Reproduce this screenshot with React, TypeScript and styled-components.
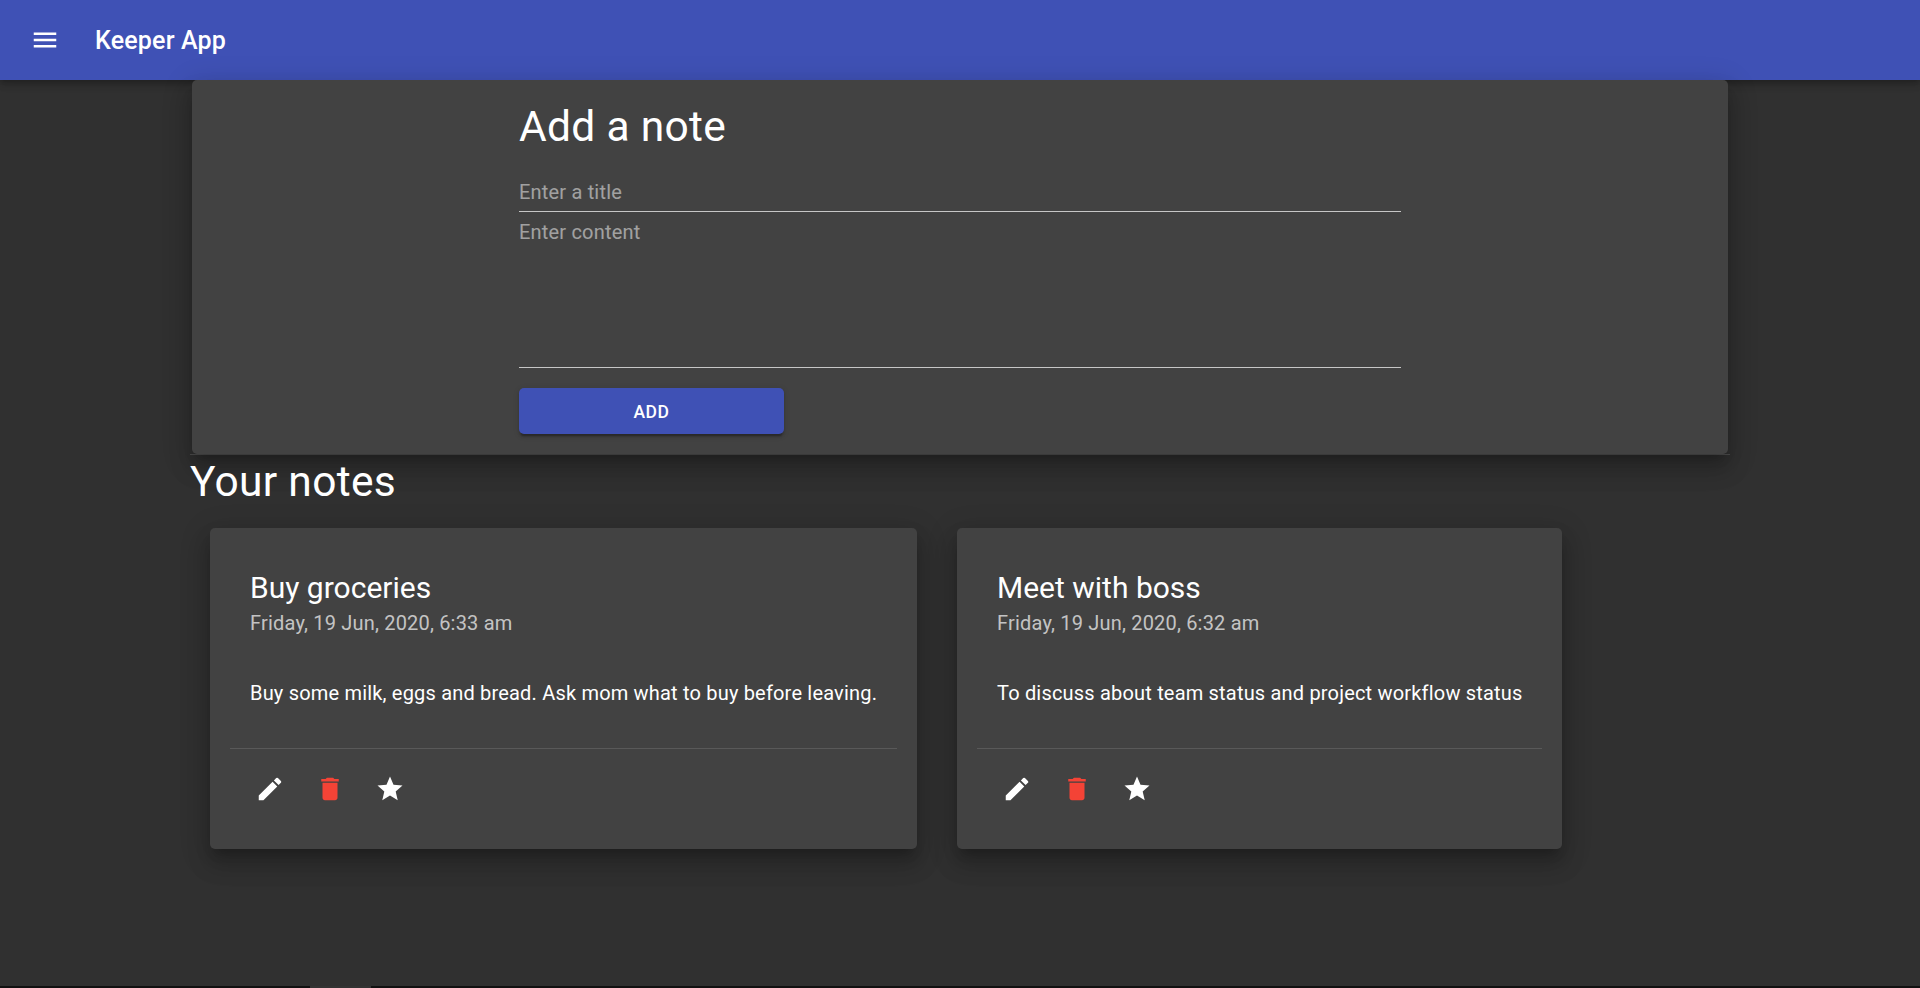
import React from "react";
import styled, { createGlobalStyle } from "styled-components";
import { MdMenu, MdEdit, MdDelete, MdStar } from "react-icons/md";

const GlobalStyle = createGlobalStyle`
  *, *::before, *::after { box-sizing: border-box; }
  html, body, #root { height: 100%; }
  body {
    margin: 0;
    background: #303030;
    color: #fff;
    font-family: Roboto, "Liberation Sans", sans-serif;
    font-size: 20px;
    line-height: 1.5;
    letter-spacing: 0.00938em;
    overflow: hidden;
  }
`;

const raised = `
  0 8.75px 10px -5px rgba(0, 0, 0, 0.2),
  0 15px 21.25px 2.5px rgba(0, 0, 0, 0.14),
  0 6.25px 27.5px 5px rgba(0, 0, 0, 0.12)`;

const Page = styled.div`
  height: 100%;
  display: flex;
  flex-direction: column;
`;

const AppBar = styled.header`
  display: flex;
  align-items: center;
  flex: none;
  height: 80px;
  padding: 0 30px 0 15px;
  background: #3f51b5;
  box-shadow: 0 2.5px 5px -1.25px rgba(0, 0, 0, 0.2),
    0 5px 6.25px 0 rgba(0, 0, 0, 0.14), 0 1.25px 12.5px 0 rgba(0, 0, 0, 0.12);
`;

const AppTitle = styled.h1`
  margin: 0 0 0 20px;
  padding-top: 2px;
  font-size: 25px;
  font-weight: 500;
  line-height: 1.6;
  letter-spacing: 0.0075em;
`;

const IconButton = styled.button<{ $color?: string }>`
  display: flex;
  align-items: center;
  justify-content: center;
  width: 60px;
  height: 60px;
  padding: 0;
  border: 0;
  border-radius: 50%;
  background: transparent;
  color: ${(p) => p.$color || "#fff"};
  font-size: 30px;
`;

const Main = styled.main`
  flex: 1;
  padding: 0 190px;
`;

const FormPaper = styled.section`
  display: flex;
  justify-content: center;
  height: 374px;
  margin: 0 2px;
  padding: 20px 0;
  border-radius: 5px;
  background: #424242;
  box-shadow: ${raised};
`;

const Form = styled.form`
  display: flex;
  flex-direction: column;
  align-items: flex-start;
  width: 882px;
`;

const Heading = styled.h2`
  margin: 0;
  padding-top: 1px;
  font-size: 42.5px;
  font-weight: 400;
  line-height: 52px;
  letter-spacing: 0.00735em;
`;

const TitleInput = styled.input`
  display: block;
  width: 100%;
  height: 40px;
  margin: 19px 0 0;
  padding: 8px 0 7px;
  border: 0;
  border-bottom: 1px solid rgba(255, 255, 255, 0.7);
  border-radius: 0;
  outline: 0;
  background: transparent;
  color: #fff;
  font: inherit;
  letter-spacing: inherit;
  line-height: 24px;
  &::placeholder { color: #fff; opacity: 0.5; }
`;

const ContentInput = styled(TitleInput).attrs({ as: "textarea" })`
  height: 156px;
  margin: 0;
  resize: none;
`;

const AddButton = styled.button`
  width: 265px;
  height: 46px;
  margin-top: 20px;
  padding: 2px 0 0;
  border: 0;
  border-radius: 5px;
  background: #3f51b5;
  color: #fff;
  font-family: inherit;
  font-size: 17.5px;
  font-weight: 500;
  letter-spacing: 0.02857em;
  text-transform: uppercase;
  box-shadow: 0 3.75px 1.25px -2.5px rgba(0, 0, 0, 0.2),
    0 2.5px 2.5px 0 rgba(0, 0, 0, 0.14), 0 1.25px 6.25px 0 rgba(0, 0, 0, 0.12);
`;

const Divider = styled.hr`
  height: 1px;
  margin: 0;
  border: 0;
  background: rgba(255, 255, 255, 0.12);
`;

const NoteList = styled.div`
  display: flex;
  align-items: flex-start;
  gap: 40px;
  padding: 20px;
`;

const NoteCard = styled.article<{ $width: number }>`
  width: ${(p) => p.$width}px;
  padding: 20px;
  border-radius: 5px;
  background: #424242;
  box-shadow: ${raised};
  white-space: nowrap;
`;

const NoteText = styled.div`
  padding: 20px 20px 40px;
`;

const NoteTitle = styled.h3`
  margin: 0;
  font-size: 30px;
  font-weight: 400;
  line-height: 40px;
  letter-spacing: 0;
`;

const NoteDate = styled.p`
  margin: 0 0 40px;
  color: rgba(255, 255, 255, 0.7);
`;

const NoteBody = styled.p`
  margin: 0;
`;

const NoteActions = styled.div`
  display: flex;
  padding: 10px;
`;

const ScrollTrack = styled.div`
  flex: none;
  height: 2px;
  padding-left: 310px;
  background: #111;
`;

const ScrollThumb = styled.div`
  width: 61px;
  height: 2px;
  background: #333;
`;

const notes = [
  {
    title: "Buy groceries",
    date: "Friday, 19 Jun, 2020, 6:33 am",
    body: "Buy some milk, eggs and bread. Ask mom what to buy before leaving.",
    width: 707,
  },
  {
    title: "Meet with boss",
    date: "Friday, 19 Jun, 2020, 6:32 am",
    body: "To discuss about team status and project workflow status",
    width: 605,
  },
];

export default function App() {
  return (
    <Page>
      <GlobalStyle />
      <AppBar>
        <IconButton aria-label="menu"><MdMenu /></IconButton>
        <AppTitle>Keeper App</AppTitle>
      </AppBar>
      <Main>
        <FormPaper>
          <Form onSubmit={(e) => e.preventDefault()}>
            <Heading>Add a note</Heading>
            <TitleInput placeholder="Enter a title" />
            <ContentInput placeholder="Enter content" />
            <AddButton type="submit">Add</AddButton>
          </Form>
        </FormPaper>
        <Divider />
        <Heading>Your notes</Heading>
        <NoteList>
          {notes.map((note) => (
            <NoteCard key={note.title} $width={note.width}>
              <NoteText>
                <NoteTitle>{note.title}</NoteTitle>
                <NoteDate>{note.date}</NoteDate>
                <NoteBody>{note.body}</NoteBody>
              </NoteText>
              <Divider />
              <NoteActions>
                <IconButton aria-label="edit"><MdEdit /></IconButton>
                <IconButton aria-label="delete" $color="#f44336"><MdDelete /></IconButton>
                <IconButton aria-label="star"><MdStar /></IconButton>
              </NoteActions>
            </NoteCard>
          ))}
        </NoteList>
      </Main>
      <ScrollTrack><ScrollThumb /></ScrollTrack>
    </Page>
  );
}
